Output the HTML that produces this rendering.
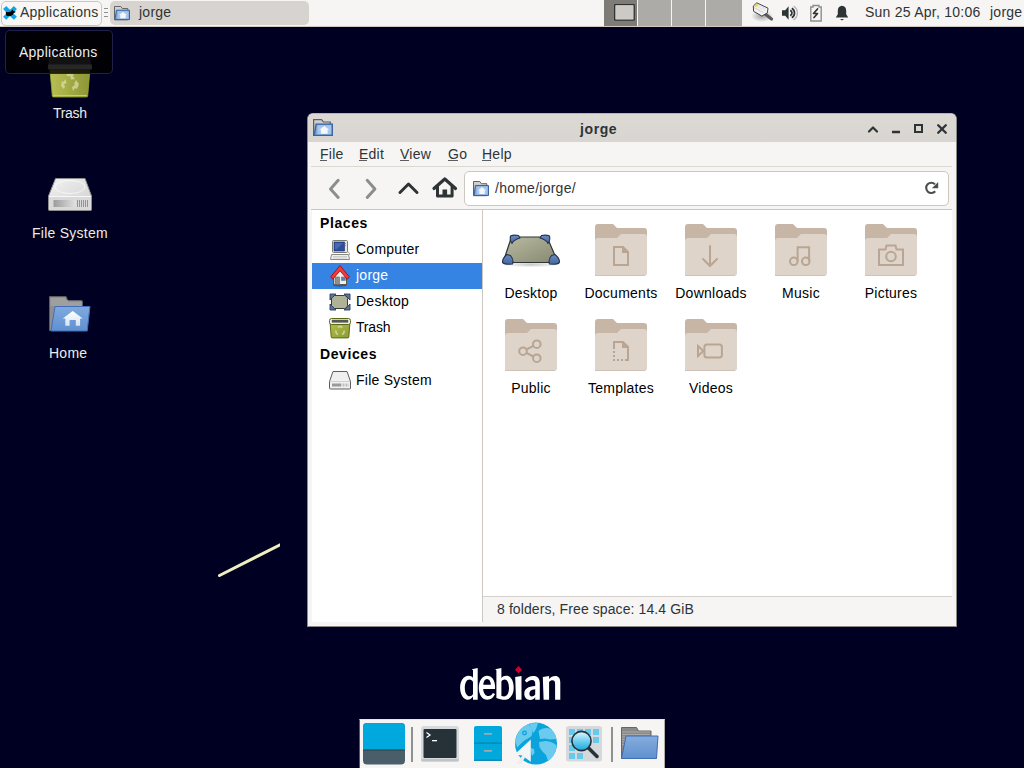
<!DOCTYPE html>
<html><head><meta charset="utf-8">
<style>
*{margin:0;padding:0;box-sizing:border-box}
html,body{width:1024px;height:768px;overflow:hidden;background:#000022;font-family:"Liberation Sans",sans-serif;font-size:14px;letter-spacing:0.25px;color:#2e3436}
.a{position:absolute}
.t{position:absolute;white-space:nowrap;line-height:14px}
.b{font-weight:bold;letter-spacing:0.6px}
.dl{color:#ececec;text-shadow:0 1px 1px rgba(0,0,0,.8)}
.lbl{position:absolute;white-space:nowrap;line-height:14px;width:90px;text-align:center;color:#000}
svg{position:absolute;overflow:visible}
</style></head><body>
<svg width="0" height="0" style="position:absolute">
 <defs>
  <symbol id="fold" viewBox="0 0 52 52">
   <path d="M0 3a3 3 0 0 1 3-3h15l4 4h27a3 3 0 0 1 3 3v13H0z" fill="#c7b6a6"/>
   <path d="M0 17a3 3 0 0 1 3-3h19l4-4h23a3 3 0 0 1 3 3v36a3 3 0 0 1-3 3H0z" fill="#ded4ca"/>
   <rect x="0" y="51" width="50" height="1" fill="#cfc2b6"/>
  </symbol>
  <linearGradient id="hdd" x1="0" y1="0" x2="0" y2="1"><stop offset="0" stop-color="#f4f4f4"/><stop offset="1" stop-color="#cfcfcf"/></linearGradient>
  <linearGradient id="bfold" x1="0" y1="0" x2="0" y2="1"><stop offset="0" stop-color="#8fb3e0"/><stop offset="1" stop-color="#5c8fd0"/></linearGradient>
  <linearGradient id="gfold" x1="0" y1="0" x2="0" y2="1"><stop offset="0" stop-color="#9a9a9a"/><stop offset="1" stop-color="#6a6a6a"/></linearGradient>
  <symbol id="hfold" viewBox="0 0 16 16" preserveAspectRatio="none">
   <linearGradient id="hfg" x1="0" y1="0" x2="0" y2="1"><stop offset="0" stop-color="#d8d8d8"/><stop offset="1" stop-color="#9c9c9c"/></linearGradient>
   <path d="M0.5 0.5h6.3l1.6 2.2h5.4v12H0.5z" fill="url(#hfg)" stroke="#606060"/>
   <path d="M2.5 4.5h13v10h-14.5z" fill="#7ea4d8" stroke="#3465a4"/>
   <rect x="3.5" y="5.5" width="11" height="8" fill="#a9c5ea"/>
   <path d="M9 6.3l4 3.2h-1.3v3.5H6.3V9.5H5z" fill="#f4f8fd"/>
  </symbol>
 </defs>
</svg>

<!-- ================= TOP PANEL ================= -->
<div class="a" style="left:0;top:0;width:1024px;height:26px;background:#f6f5f4"></div>
<div class="a" style="left:0;top:26px;width:1024px;height:1px;background:#cfc9c2"></div>
<div class="a" style="left:1px;top:1px;width:101px;height:25px;border:1px solid #cdc7c2;border-radius:5px;background:#f8f7f6"></div>
<svg style="left:0px;top:0px" width="20" height="26" viewBox="0 0 20 26">
 <path d="M6.2 9.1l7.6 7.6M13.8 9.1l-7.6 7.6" stroke="#0ea6e6" stroke-width="4.4" stroke-linecap="square"/>
 <path d="M5.8 11.8l2 .4 3.2-.6 1.3-2.2 1 1.6 2.3.4-.4 1-1.5.5-1 1.8-2 1.2h-3.7l-1-1.2z" fill="#000"/>
</svg>
<div class="t" style="left:20px;top:5px">Applications</div>
<div class="a" style="left:104px;top:8px;width:4px;height:1px;background:#8f8f8f"></div>
<div class="a" style="left:104px;top:12px;width:4px;height:1px;background:#8f8f8f"></div>
<div class="a" style="left:104px;top:16px;width:4px;height:1px;background:#8f8f8f"></div>
<div class="a" style="left:110px;top:1px;width:199px;height:24px;border-radius:5px;background:#d7d3cf"></div>
<svg style="left:114px;top:6px" width="16" height="15"><use href="#hfold" width="16" height="15"/></svg>
<div class="t" style="left:139px;top:5px">jorge</div>

<!-- workspaces -->
<div class="a" style="left:604px;top:0;width:33px;height:26px;background:#7f7b76"></div>
<svg style="left:0;top:0" width="640" height="26"><rect x="614.7" y="4.6" width="19.5" height="15.5" rx=".4" fill="#e6e3df" stroke="#2e3436" stroke-width="1.4"/><rect x="615.9" y="5.8" width="17.1" height="13.1" fill="#cdcac6"/></svg>
<div class="a" style="left:638px;top:0;width:33px;height:26px;background:#adaba8"></div>
<div class="a" style="left:672px;top:0;width:33px;height:26px;background:#adaba8"></div>
<div class="a" style="left:706px;top:0;width:36px;height:26px;background:#adaba8"></div>
<!-- tray -->
<!-- tray icons -->
<svg style="left:748px;top:0px" width="28" height="26" viewBox="748 0 28 26">
 <defs><radialGradient id="nsh"><stop offset="0" stop-color="#000" stop-opacity=".35"/><stop offset="1" stop-color="#000" stop-opacity="0"/></radialGradient></defs>
 <ellipse cx="762" cy="16" rx="11" ry="6" fill="url(#nsh)"/>
 <path d="M764.5 13.5l7 5.5" stroke="#5a5a5a" stroke-width="3.2" stroke-linecap="round"/>
 <path d="M753.3 6l3.5-3.2 11.2 5.4-.6 4.6-5.5 3.3-8.3-4.8z" fill="#f2f2f2" stroke="#2e3436" stroke-width=".9" stroke-linejoin="round"/>
 <path d="M754 7.5l9.5 5.2" stroke="#c8c8c8" stroke-width=".8"/>
 <path d="M756 6l9 4.5M757 4.5l9 4.5" stroke="#d8d8d8" stroke-width=".7"/>
 <path d="M754.3 6.2l2.6-2.4 1.8.9-2.6 2.5z" fill="#f5d44e"/>
</svg>
<svg style="left:780px;top:5px" width="18" height="16" viewBox="0 0 18 16" fill="none">
 <path d="M2 5.2h3.2L8.6 1.2v13.6L5.2 10.8H2z" fill="#2e3436"/>
 <path d="M10.2 5.4a2.8 2.8 0 0 1 0 5.2" stroke="#2e3436" stroke-width="1.7"/>
 <path d="M11.8 3.2a5.6 5.6 0 0 1 0 9.6" stroke="#2e3436" stroke-width="1.7"/>
 <path d="M13.6 1.2a8 8 0 0 1 0 13.6" stroke="#b8b8b8" stroke-width="1.4"/>
</svg>
<svg style="left:809px;top:4px" width="14" height="18" viewBox="0 0 14 18" fill="none">
 <path d="M4 1.5h6v1.5h2.2v14H1.8v-14H4z" stroke="#8d8f8e" stroke-width="1.4"/>
 <path d="M8.5 5L4.5 9.5h4L5 13.5" stroke="#2e3436" stroke-width="1.7" stroke-linecap="round" stroke-linejoin="round"/>
</svg>
<svg style="left:835px;top:5px" width="14" height="16" viewBox="0 0 14 16">
 <path d="M7 0.8c-2.8 0-4.2 2.2-4.2 5v3.5L0.8 12.5h12.4l-2-3.2V5.8c0-2.8-1.4-5-4.2-5z" fill="#2e3436"/>
 <path d="M5 14h4l-2 1.5z" fill="#2e3436"/>
</svg>

<div class="t" style="left:865px;top:5px">Sun 25 Apr, 10:06</div>
<div class="t" style="left:990px;top:5px">jorge</div>

<!-- ================= DESKTOP ICONS ================= -->
<!-- desktop icons -->
<svg style="left:46px;top:54px" width="48" height="45" viewBox="46 54 48 45">
 <defs><linearGradient id="trb" x1="0" y1="0" x2="1" y2="0"><stop offset="0" stop-color="#b8c052"/><stop offset="1" stop-color="#8c9436"/></linearGradient></defs>
 <path d="M49.8 69h40.2l-2.3 27a1.2 1.2 0 0 1-1.2 1H53.5a1.2 1.2 0 0 1-1.2-1z" fill="url(#trb)" stroke="#9aa238" stroke-width=".8"/>
 <path d="M52.8 95.5h34" stroke="#c8d060" stroke-width="1"/>
 <path d="M50 56.5h38.5l3.5 12.5H48z" fill="#6c6c6c" stroke="#8a8a8a" stroke-width=".8"/>
 <path d="M48.3 64.5h43.4l.3 4.5H48z" fill="#e4e8e4"/>
 <g fill="#eef0d0" opacity=".55">
  <path d="M66 75l4-3 4 3-1.5 1 2.5 3-4 .5-1-4-1.5 1z"/>
  <path d="M76 80l3 4-2 5-2-1-2 3-1-4 3-2-1-1z"/>
  <path d="M64 89l-3-3 1-5 1.5 1 2-3 1 4-3 1.5 1.5 1.5z"/>
 </g>
</svg>
<svg style="left:47px;top:176px" width="47" height="37" viewBox="47 176 47 37">
 <defs><linearGradient id="hdt" x1="0" y1="0" x2="1" y2="1"><stop offset="0" stop-color="#f2f2f2"/><stop offset="1" stop-color="#cfcfcf"/></linearGradient>
 <linearGradient id="hds" x1="0" y1="0" x2="1" y2="0"><stop offset="0" stop-color="#9c9c9c"/><stop offset="1" stop-color="#e0e0e0"/></linearGradient></defs>
 <path d="M55.5 178.5h29.5l6.5 17.5v13.5a1 1 0 0 1-1 1H49.5a1 1 0 0 1-1-1V196z" fill="url(#hdt)" stroke="#8c8c8c"/>
 <ellipse cx="70" cy="187" rx="15" ry="6.5" fill="none" stroke="#fff" stroke-width=".8" opacity=".8"/>
 <path d="M49 196.5h42" stroke="#f6f6f6"/>
 <rect x="49" y="197" width="42" height="13" fill="#d9d9d9"/>
 <rect x="53.5" y="200" width="22" height="7" fill="url(#hds)"/>
 <path d="M77.5 200v7M79.5 200v7M81.5 200v7M83.5 200v7M85.5 200v7M87.5 200v7" stroke="#8a8a8a" stroke-width=".9"/>
</svg>
<svg style="left:48px;top:294px" width="44" height="40" viewBox="48 294 44 40">
 <defs><linearGradient id="hmb" x1="0" y1="0" x2="0" y2="1"><stop offset="0" stop-color="#80a9de"/><stop offset="1" stop-color="#5f90d0"/></linearGradient>
 <linearGradient id="hmh" x1="0" y1="0" x2="0" y2="1"><stop offset="0" stop-color="#fff"/><stop offset="1" stop-color="#d4e3f4"/></linearGradient></defs>
 <path d="M49.5 296.5h16.5l2 4.5h14.5v29.5H49.5z" fill="#8f8f8f" stroke="#5c5c5c"/>
 <path d="M50.5 299h15M50.5 301h31M50.5 303h31M50.5 305h31" stroke="#b8b8b8" stroke-width=".8"/>
 <path d="M55 306.5h35l-2.8 24.5H51z" fill="url(#hmb)" stroke="#3e6fb8"/>
 <path d="M72.7 311l10 7.6h-2.6v7.1h-4.3v-5.8h-6.2v5.8h-4.3v-7.1h-2.6z" fill="url(#hmh)"/>
</svg>

<div class="t dl" style="left:53px;top:106px;letter-spacing:-0.3px">Trash</div>
<div class="t dl" style="left:32px;top:226px">File System</div>
<div class="t dl" style="left:49px;top:346px">Home</div>

<!-- tooltip -->
<div class="a" style="left:5px;top:30px;width:108px;height:44px;border-radius:5px;background:rgba(0,0,0,.83);border:1px solid rgba(40,40,90,.8)"></div>
<div class="t" style="left:19px;top:45px;color:#eee">Applications</div>

<!-- stray line -->
<svg style="left:200px;top:530px;overflow:hidden" width="80" height="60" viewBox="200 530 80 60"><line x1="219.5" y1="575.5" x2="282" y2="543.8" stroke="#efefc2" stroke-width="3" stroke-linecap="round"/></svg>

<!-- ================= WINDOW ================= -->
<div class="a" style="left:307px;top:113px;width:650px;height:514px;background:#f6f5f4;border:1px solid #8c8884;border-top-color:#b8b4b0;border-radius:6px 6px 0 0"></div>
<div class="a" style="left:308px;top:114px;width:648px;height:28px;background:linear-gradient(#dcd8d4,#d9d5d1);border-radius:5px 5px 0 0"></div>
<!-- window icons -->
<svg style="left:313px;top:119px" width="20" height="18"><use href="#hfold" width="20" height="18"/></svg>
<svg style="left:860px;top:116px" width="96" height="24" viewBox="0 0 96 24" fill="none" stroke="#2e3436" stroke-width="2.2">
 <path d="M9 15.5l4-4 4 4" stroke-linecap="round" stroke-linejoin="round"/>
 <path d="M32 16h8" stroke-width="2.5"/>
 <rect x="55" y="9" width="7" height="7" stroke-width="2"/>
 <path d="M78.2 9.2l7.6 7.6M85.8 9.2l-7.6 7.6" stroke-linecap="round" stroke-width="2.3"/>
</svg>
<svg style="left:320px;top:172px" width="150" height="34" viewBox="0 0 150 34" fill="none" stroke-width="3" stroke-linecap="round" stroke-linejoin="round">
 <path d="M18.2 8.3L10.5 16.9 18.2 25.5" stroke="#8b8e8f"/>
 <path d="M47.2 8.3L54.9 16.9 47.2 25.5" stroke="#8b8e8f"/>
 <path d="M80 20.5l8.5-8.5 8.5 8.5" stroke="#2e3436"/>
 <path d="M114 16.5L124.8 7 135.5 16.5" stroke="#2e3436" stroke-width="3.2"/>
 <path d="M117.5 14.5v9.5h14.6v-9.5" stroke="#2e3436" stroke-width="3"/>
 <rect x="122.5" y="17.5" width="4.6" height="7" fill="#2e3436" stroke="none"/>
</svg>


<div class="t b" style="left:580px;top:122px">jorge</div>
<!-- menubar -->
<div class="t" style="left:320px;top:147px">File</div>
<div class="t" style="left:359px;top:147px">Edit</div>
<div class="t" style="left:400px;top:147px">View</div>
<div class="t" style="left:448px;top:147px">Go</div>
<div class="t" style="left:482px;top:147px">Help</div>
<div class="a" style="left:320px;top:160px;width:7px;height:1px;background:#5a5e60"></div><div class="a" style="left:359px;top:160px;width:8px;height:1px;background:#5a5e60"></div><div class="a" style="left:400px;top:160px;width:9px;height:1px;background:#5a5e60"></div><div class="a" style="left:448px;top:160px;width:10px;height:1px;background:#5a5e60"></div><div class="a" style="left:482px;top:160px;width:9px;height:1px;background:#5a5e60"></div>
<div class="a" style="left:311px;top:166px;width:641px;height:1px;background:#dcd8d4"></div>
<!-- path entry -->
<div class="a" style="left:464px;top:171px;width:485px;height:35px;background:#fff;border:1px solid #cdc7c2;border-radius:5px"></div>
<svg style="left:473px;top:181px" width="16" height="16"><use href="#hfold" width="16" height="16"/></svg>
<div class="t" style="left:495px;top:181px">/home/jorge/</div>
<svg style="left:922px;top:179px" width="18" height="18" viewBox="0 0 18 18" fill="none">
 <path d="M13 5.4A5.1 5.1 0 1 0 13.2 12.2" stroke="#4a4e50" stroke-width="2.1"/>
 <path d="M16.2 2.9v6.3h-6.3z" fill="#4a4e50"/>
</svg>
<div class="a" style="left:311px;top:209px;width:641px;height:1px;background:#cdc7c2"></div>
<!-- sidebar -->
<div class="a" style="left:312px;top:210px;width:170px;height:412px;background:#fff"></div>
<div class="a" style="left:482px;top:210px;width:1px;height:412px;background:#cdc7c2"></div>
<div class="a" style="left:312px;top:263px;width:170px;height:26px;background:#3584e4"></div>
<div class="t b" style="left:320px;top:216px;color:#000">Places</div>
<div class="t" style="left:356px;top:242px;color:#000">Computer</div>
<div class="t" style="left:356px;top:268px;color:#fff">jorge</div>
<div class="t" style="left:356px;top:294px;color:#000">Desktop</div>
<div class="t" style="left:356px;top:320px;color:#000;letter-spacing:-0.2px">Trash</div>
<div class="t b" style="left:320px;top:347px;color:#000">Devices</div>
<div class="t" style="left:356px;top:373px;color:#000">File System</div>
<!-- sidebar icons -->
<svg style="left:330px;top:239px" width="22" height="22" viewBox="0 0 22 22">
 <rect x="2.5" y="1.5" width="15" height="12" rx="1" fill="#e6e6e2" stroke="#7a7a76"/>
 <rect x="4" y="3" width="10.5" height="9" fill="#2c4f9e" stroke="#1d2f66" stroke-width=".6"/>
 <path d="M5 4h8l-6 6H5z" fill="#5a7cc0" opacity=".6"/>
 <path d="M15.5 4v1M15.5 6v1" stroke="#9a9a96"/>
 <path d="M1.5 15.5h17l1 5h-19z" fill="#f0f0ee" stroke="#8a8a86"/>
 <path d="M3 17.5h14M3 19h14" stroke="#c4c4c0" stroke-width=".8"/>
 <path d="M18 13c1.5 .5 2 2 1 3" stroke="#9a9a96" fill="none"/>
</svg>
<svg style="left:328px;top:262px" width="24" height="26" viewBox="328 262 24 26">
 <ellipse cx="340" cy="285.5" rx="7" ry="1.2" fill="#10306a" opacity=".45"/>
 <rect x="333.5" y="274.5" width="13" height="10" fill="#f0f0ee" stroke="#555753"/><path d="M334 275l6-6.5 6 6.5z" fill="#f0f0ee"/>
 <rect x="335" y="277" width="4.5" height="7.5" fill="#8f908c" stroke="#666" stroke-width=".6"/>
 <rect x="341.3" y="277" width="4" height="3.5" fill="#5b80c0" stroke="#777" stroke-width=".6"/>
 <path d="M330.7 276.8L340 265.5 349.3 276.8 347.2 279.2 340 270.8 332.8 279.2z" fill="#ef3b3b" stroke="#a40000" stroke-width=".8" stroke-linejoin="round"/>
</svg>
<svg style="left:329px;top:293px" width="22" height="19" viewBox="0 0 22 19">
 <rect x="2.5" y="2.5" width="16" height="13" rx="3" fill="#b0b297" stroke="#3b3e30"/>
 <path d="M1 1h6L1 7z M21 1h-6l6 6z M1 17h6L1 11z M21 17h-6l6-6z" fill="#5a7399" stroke="#2e3f5e" stroke-width=".9" stroke-linejoin="round"/>
</svg>
<svg style="left:328px;top:317px" width="24" height="22" viewBox="0 0 24 22">
 <defs><linearGradient id="trs" x1="0" y1="0" x2="1" y2="1"><stop offset="0" stop-color="#b3bd4e"/><stop offset="1" stop-color="#8c9a30"/></linearGradient></defs>
 <path d="M2.2 7h19.6l-1 13a1 1 0 0 1-1 .9H4.2a1 1 0 0 1-1-.9z" fill="url(#trs)" stroke="#5d6a12"/>
 <rect x="1.5" y="1.5" width="21" height="6" rx="2" fill="#eeeeec" stroke="#5d6a12"/>
 <rect x="3.8" y="2.8" width="16.4" height="2.8" fill="#555753"/>
 <g fill="none" stroke="#dfe6b0" stroke-width="1.4" opacity=".8"><path d="M10 10.5a3.5 3.5 0 0 1 4.5 0"/><path d="M16 13.5a3.5 3.5 0 0 1-2 4"/><path d="M10 17.5a3.5 3.5 0 0 1-2-4"/></g>
</svg>
<svg style="left:328px;top:370px" width="24" height="20" viewBox="0 0 24 20">
 <path d="M5 1.5h14l3.5 10v6.5a1 1 0 0 1-1 1H2.5a1 1 0 0 1-1-1v-6.5z" fill="#f0f0f0" stroke="#5e5e5e" stroke-linejoin="round"/>
 <path d="M2 11.5h20" stroke="#d0d0d0"/>
 <rect x="4" y="13.5" width="9" height="3" fill="#9a9a9a"/>
 <path d="M14 13.5v3M15.5 13.5v3M17 13.5v3M18.5 13.5v3M20 13.5v3" stroke="#aaa" stroke-width=".7"/>
</svg>

<!-- content -->
<div class="a" style="left:483px;top:210px;width:469px;height:386px;background:#fff"></div>
<div class="a" style="left:483px;top:596px;width:469px;height:1px;background:#d5d0cc"></div>
<div class="t" style="left:497px;top:602px;letter-spacing:0.1px">8 folders, Free space: 14.4 GiB</div>
<!-- desktop (content) -->
<svg style="left:500px;top:232px" width="62" height="36" viewBox="0 0 62 36">
 <defs><linearGradient id="dsk" x1="0" y1="0" x2="1" y2="1"><stop offset="0" stop-color="#b9bba3"/><stop offset="1" stop-color="#878870"/></linearGradient>
 <linearGradient id="dbl" x1="0" y1="0" x2="0" y2="1"><stop offset="0" stop-color="#6a8cc0"/><stop offset="1" stop-color="#46679c"/></linearGradient>
 <radialGradient id="shd"><stop offset="0" stop-color="#000" stop-opacity=".22"/><stop offset="1" stop-color="#000" stop-opacity="0"/></radialGradient></defs>
 <ellipse cx="31" cy="32.5" rx="29" ry="3" fill="url(#shd)"/>
 <path d="M11.5 5h35.5l11 25.5H3z" fill="url(#dsk)" stroke="#2e3436" stroke-width="1.2" stroke-linejoin="round"/>
 <path d="M12 11.5c1-2.5 4.5-4.5 8-5.5l-1.5-2.5c-2.5-.5-6-.5-8 .5-.5 2-.5 5 1.5 7.5z" fill="url(#dbl)" stroke="#24324e" stroke-width="1.1" stroke-linejoin="round"/>
 <path d="M48 11.5c-1-2.5-4.5-4.5-8-5.5l1.5-2.5c2.5-.5 6-.5 8 .5.5 2 .5 5-1.5 7.5z" fill="url(#dbl)" stroke="#24324e" stroke-width="1.1" stroke-linejoin="round"/>
 <path d="M7 22.5c-2.5 2-4.5 5-4.5 7.5.5 2 4 2.5 10 2 1-2.5.5-5.5-2-8.5z" fill="url(#dbl)" stroke="#24324e" stroke-width="1.1" stroke-linejoin="round"/>
 <path d="M55 22.5c2.5 2 4.5 5 4.5 7.5-.5 2-4 2.5-10 2-1-2.5-.5-5.5 2-8.5z" fill="url(#dbl)" stroke="#24324e" stroke-width="1.1" stroke-linejoin="round"/>
</svg>
<svg style="left:595px;top:224px" width="52" height="52" viewBox="0 0 52 52"><use href="#fold" width="52" height="52"/><path d="M19 23h9l5 5v13h-14z" stroke="#b9a593" stroke-width="2" fill="none"/><path d="M27 22v7h7" fill="#b9a593"/><path d="M28 24l4 4h-4z" fill="#b9a593"/></svg>
<svg style="left:685px;top:224px" width="52" height="52" viewBox="0 0 52 52"><use href="#fold" width="52" height="52"/><path d="M25 22v20M18 35l7 7 7-7" stroke="#b9a593" stroke-width="2" fill="none" stroke-linecap="round"/></svg>
<svg style="left:775px;top:224px" width="52" height="52" viewBox="0 0 52 52"><use href="#fold" width="52" height="52"/><circle cx="18.8" cy="37.3" r="3.8" stroke="#b9a593" stroke-width="2" fill="none"/><circle cx="30.8" cy="37.3" r="3.8" stroke="#b9a593" stroke-width="2" fill="none"/><path d="M22.6 37.3V23.2h11.5v14.1" stroke="#b9a593" stroke-width="2" fill="none"/></svg>
<svg style="left:865px;top:224px" width="52" height="52" viewBox="0 0 52 52"><use href="#fold" width="52" height="52"/><path d="M14 25.5h6.5l1-4h9l1 4h6.5V41H14z" stroke="#b9a593" stroke-width="2" fill="none"/><circle cx="26" cy="32.5" r="4.8" stroke="#b9a593" stroke-width="2" fill="none"/></svg>
<svg style="left:505px;top:319px" width="52" height="52" viewBox="0 0 52 52"><use href="#fold" width="52" height="52"/><circle cx="18" cy="32.2" r="3.8" stroke="#b9a593" stroke-width="2" fill="none"/><circle cx="31.8" cy="25.2" r="3.8" stroke="#b9a593" stroke-width="2" fill="none"/><circle cx="31.8" cy="39.2" r="3.8" stroke="#b9a593" stroke-width="2" fill="none"/><path d="M21.4 30.5l7-3.6M21.4 33.9l7 3.6" stroke="#b9a593" stroke-width="2" fill="none"/></svg>
<svg style="left:595px;top:319px" width="52" height="52" viewBox="0 0 52 52"><use href="#fold" width="52" height="52"/><path d="M19 30v-7h9l5 5v13h-3" stroke="#b9a593" stroke-width="2" fill="none"/><path d="M27 22v7h7" fill="#b9a593"/><path d="M18 32h2v2h-2zM18 36h2v2h-2zM18 40h2v2h-2zM22 40h2v2h-2zM26 40h2v2h-2z" fill="#b9a593"/></svg>
<svg style="left:685px;top:319px" width="52" height="52" viewBox="0 0 52 52"><use href="#fold" width="52" height="52"/><rect x="19.4" y="25.4" width="17.5" height="13.2" rx="2.5" stroke="#b9a593" stroke-width="2" fill="none"/><path d="M13 27v10l5.4-5z" stroke="#b9a593" stroke-width="2" fill="none"/></svg>
<div class="lbl" style="left:486px;top:286px">Desktop</div>
<div class="lbl" style="left:576px;top:286px">Documents</div>
<div class="lbl" style="left:666px;top:286px">Downloads</div>
<div class="lbl" style="left:756px;top:286px">Music</div>
<div class="lbl" style="left:846px;top:286px">Pictures</div>
<div class="lbl" style="left:486px;top:381px">Public</div>
<div class="lbl" style="left:576px;top:381px">Templates</div>
<div class="lbl" style="left:666px;top:381px">Videos</div>


<!-- ================= DEBIAN LOGO ================= -->
<svg style="left:455px;top:660px" width="115" height="45" viewBox="455 660 115 45">
 <g fill="#fff">
  <path fill-rule="evenodd" d="M468.5 675.8c-5 0-8.4 5.2-8.4 12s3.4 12 7.6 12c2.3 0 4.1-1.2 5.3-3.2v3.2h4.7V667.9l-5.9 1.3 1.2 1.1v7.4c-1.2-1.2-2.6-1.9-4.5-1.9zM469.4 679.6c1.6 0 2.8.9 3.6 2.3v12.2c-.8 1.5-1.9 2.2-3.3 2.2-2.6 0-4.9-3.1-4.9-8.3s2-8.4 4.6-8.4z"/>
  <path fill-rule="evenodd" d="M487 675.8c-4.8 0-8.2 5.2-8.2 12.2 0 7 3.6 11.8 8.7 11.8 3.5 0 6.1-2.3 7.5-5.7l-2.1-1c-1 1.9-2.4 2.9-4.4 2.9-3 0-5.2-3.1-5.3-7.1h11.8c.1-.6.1-1.2.1-1.8 0-6.8-3.3-11.3-8.1-11.3zM487 679c2.2 0 3.7 2.3 3.9 5.8h-7.7c.3-3.5 1.7-5.8 3.8-5.8z"/>
  <path fill-rule="evenodd" d="M495.2 669.2l6.2-1.3v10.2c1.2-1.5 2.7-2.3 4.7-2.3 4.8 0 7.6 5.1 7.6 11.8 0 7.2-3.6 12.2-9.1 12.2-2.8 0-5.4-.6-8.2-1.8V670.3zM504.7 679.6c-1.3 0-2.4.7-3.3 1.9v14.6c.8.3 1.8.4 2.7.4 2.8 0 4.9-3.1 4.9-8.4 0-5.2-1.9-8.5-4.3-8.5z"/>
  <path d="M515.2 677l6.3-1.1v23.8H516z"/>
  <path fill-rule="evenodd" d="M524.8 680.5c2-3 4.8-4.6 8.4-4.6 4.6 0 6.6 2.6 6.6 7.2v16.6h-4.6v-2.4c-1.2 1.8-3 2.7-5.1 2.7-3.6 0-5.8-2.4-5.8-6.4 0-4.8 3.6-7.4 10.9-7.7v-2.3c0-2.4-1-3.7-3.2-3.7-1.9 0-3.6.9-5.3 2.7zM535.2 689.2c-4 .3-5.8 1.9-5.8 4.4 0 1.8.9 2.9 2.4 2.9 1.4 0 2.6-.7 3.4-2z"/>
  <path d="M542.8 677l6.3-1.1v3c1.6-1.9 3.7-3 6.1-3 3.4 0 5.1 2.3 5.1 6.6v17.2h-5.2v-15.8c0-2.5-.8-3.6-2.6-3.6-1.3 0-2.5.6-3.4 1.6v17.8h-5.5z"/>
 </g>
 <path d="M518.5 666.1l3.6 3.6-3.6 3.6-3.6-3.6z" fill="#c70036"/>
</svg>


<!-- ================= DOCK ================= -->
<div class="a" style="left:359px;top:719px;width:306px;height:49px;background:#f6f5f4;border-left:1px solid #5a5652;border-top:1px solid #e8e4e0;border-right:1px solid #b0aca8"></div>
<!-- dock icons -->
<svg style="left:359px;top:719px" width="306" height="49" viewBox="359 719 306 49">
 <defs>
  <linearGradient id="lens" x1="0" y1="0" x2="0" y2="1"><stop offset="0" stop-color="#e6f6fc"/><stop offset=".5" stop-color="#6fd0f2"/><stop offset="1" stop-color="#1aa6dc"/></linearGradient>
  <linearGradient id="dfb" x1="0" y1="0" x2="0" y2="1"><stop offset="0" stop-color="#86addd"/><stop offset="1" stop-color="#5f90cf"/></linearGradient>
 </defs>
 <!-- show desktop -->
 <rect x="363" y="723" width="42" height="41.5" rx="4" fill="#4a5e6a"/>
 <path d="M367 723h34a4 4 0 0 1 4 4v23h-42v-23a4 4 0 0 1 4-4z" fill="#00a9dd"/>
 <rect x="363" y="749.5" width="42" height="1" fill="#2f3e47"/>
 <rect x="411" y="727" width="2" height="35" fill="#8d9190"/>
 <!-- terminal -->
 <rect x="421" y="726" width="38" height="35.5" rx="3" fill="#d6dadd"/>
 <rect x="421" y="759" width="38" height="2.5" rx="1" fill="#bfc4c8"/>
 <rect x="423.5" y="729" width="33" height="29" rx="1" fill="#263238"/>
 <path d="M426.5 732.5l3.5 2.5-3.5 2.5" stroke="#fff" stroke-width="1.3" fill="none"/>
 <rect x="432" y="740" width="5" height="1.3" fill="#fff"/>
 <!-- file cabinet -->
 <rect x="474" y="726" width="28" height="35" rx="2" fill="#00a8dc"/>
 <rect x="474" y="759.5" width="28" height="1.5" fill="#0b8bb8"/>
 <rect x="474" y="742.5" width="28" height="1.2" fill="#0a7fa8"/>
 <rect x="484" y="733" width="8" height="1.8" rx=".5" fill="#a8a8a8"/>
 <rect x="484" y="750" width="8" height="1.8" rx=".5" fill="#a8a8a8"/>
 <!-- globe -->
 <circle cx="536" cy="743.6" r="21" fill="#0aa3dc"/>
 <path d="M515.3 743C516 733 522 726 529 724l2 4c1.5 3 2 6 0 8.5l-4 2.5c-3 1.5-6 4-9.5 8.5z" fill="#6acbee"/>
 <circle cx="524.5" cy="733" r="1.8" fill="none" stroke="#0aa3dc" stroke-width="1.3"/>
 <path d="M529.5 723.5l8.5-.4-2 5.9-2.5 4-2.5-4z" fill="#6acbee"/>
 <path d="M538.5 731c3.5-3 8.5-4 12.5-2l4 5 1.5 5-6.5.5-5-1-5 .5z" fill="#6acbee"/>
 <path d="M539 742l7-1 5 1 4 2 1.5 2c-.5 6-3.5 12-8.5 15l-2-6-4-4-2.5-4z" fill="#6acbee"/>
 <path d="M531 748l3 1 .5 4-2.5 3-1-4z" fill="#6acbee"/>
 <path d="M530.8 739.4L514.5 754.5 522 755.5 530.8 761.8z" fill="#f3f4f6"/>
 <path d="M523 757.5l-3.5 5" stroke="#eceef1" stroke-width="3.6" stroke-linecap="round"/>
 <!-- search -->
 <rect x="566" y="726" width="36" height="35.5" rx="2.5" fill="#d6d9dc"/>
 <g fill="#67c9ec">
  <rect x="569" y="729" width="6" height="6"/><rect x="577" y="729" width="6" height="6"/><rect x="585" y="729" width="6" height="6"/><rect x="593" y="729" width="6" height="6"/>
  <rect x="569" y="737" width="6" height="6"/><rect x="593" y="737" width="6" height="6"/>
  <rect x="569" y="745" width="6" height="6"/>
  <rect x="569" y="753" width="6" height="6"/><rect x="577" y="753" width="6" height="6"/>
 </g>
 <path d="M588.5 748l8.5 8.5" stroke="#263238" stroke-width="3.5" stroke-linecap="round"/>
 <circle cx="581.5" cy="741" r="9.6" fill="url(#lens)" stroke="#263238" stroke-width="1.6"/>
 <rect x="611" y="727" width="2" height="35" fill="#8d9190"/>
 <!-- folder -->
 <path d="M621.5 727.5h15l2 3.5h12.5v27.5H621.5z" fill="#8a8a8a" stroke="#666"/>
 <path d="M622 732h28M622 734.5h28M622 737h28M622 739.5h28M622 742h28M622 744.5h28" stroke="#b0b0b0" stroke-width=".8"/>
 <path d="M626 736h32l-1.5 22.5H621.5z" fill="url(#dfb)" stroke="#3f6db0"/>
</svg>

</body></html>
